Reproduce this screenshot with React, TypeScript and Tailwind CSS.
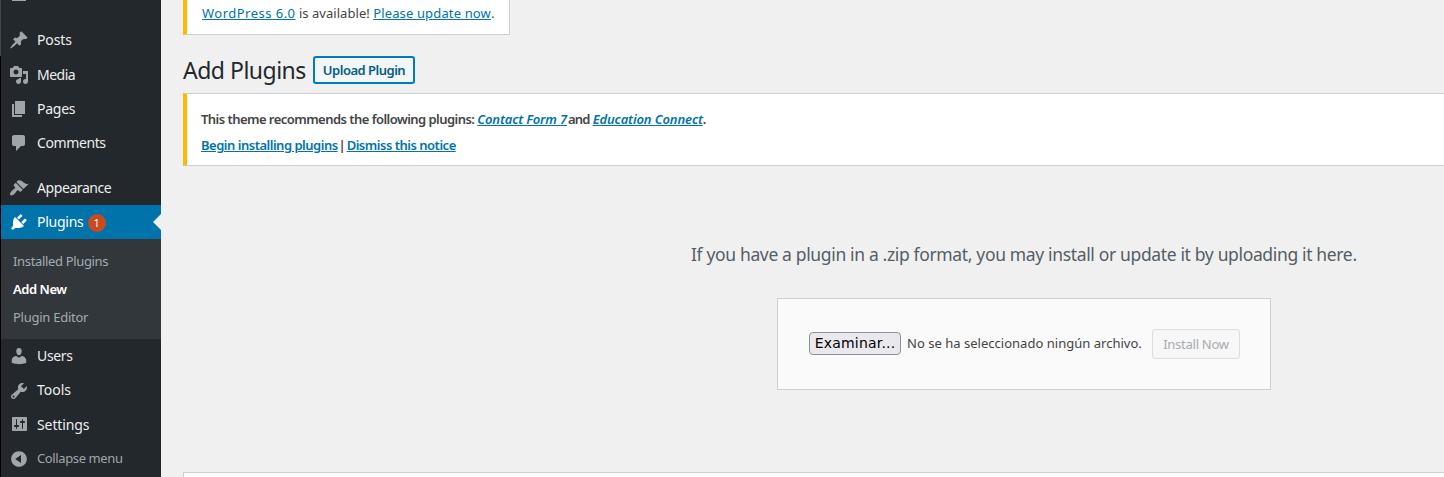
import React from "react";

const icons = {
  post: "M10.44 3.02l1.82-1.82 6.36 6.35-1.83 1.82c-1.05-.68-2.48-.57-3.41.36l-.75.75c-.92.93-1.04 2.35-.35 3.41l-1.83 1.82-2.41-2.41-2.8 2.79c-.42.42-3.38 2.71-3.8 2.29s1.86-3.39 2.28-3.81l2.79-2.79L4.1 9.36l1.83-1.82c1.05.69 2.48.57 3.4-.36l.75-.75c.93-.92 1.05-2.35.36-3.41z",
  media: "M13 11V4c0-.55-.45-1-1-1h-1.67L9 1H5L3.67 3H2c-.55 0-1 .45-1 1v7c0 .55.45 1 1 1h10c.55 0 1-.45 1-1zM7 4.5c1.38 0 2.5 1.12 2.5 2.5S8.38 9.5 7 9.5 4.5 8.38 4.5 7 5.62 4.5 7 4.5zM14 6h5v10.5c0 1.38-1.12 2.5-2.5 2.5S14 17.88 14 16.5s1.12-2.5 2.5-2.5c.17 0 .34.02.5.05V9h-3V6zm-4 8.05V13h2v3.5c0 1.38-1.12 2.5-2.5 2.5S7 17.88 7 16.5 8.12 14 9.5 14c.17 0 .34.02.5.05z",
  page: "M6 15V2h10v13H6zm-1 1h8v2H3V5h2v11z",
  comments: "M5 2h9c1.1 0 2 .9 2 2v7c0 1.1-.9 2-2 2h-2l-5 5v-5H5c-1.1 0-2-.9-2-2V4c0-1.1.9-2 2-2z",
  appearance: "M14.48 11.06L7.41 3.99l1.5-1.5c.5-.56 2.3-.47 3.51.32 1.21.8 1.43 1.28 2.91 2.1 1.18.64 2.45 1.26 4.45.85zm-.71.71L6.7 4.7 4.93 6.47c-.39.39-.39 1.02 0 1.41l1.06 1.06c.39.39.39 1.03 0 1.42-.6.6-1.43 1.11-2.21 1.69-.35.26-.7.53-1.01.84C1.43 14.23.4 16.08 1.4 17.07c.99 1 2.84-.03 4.18-1.36.31-.31.58-.66.85-1.02.57-.78 1.08-1.61 1.69-2.21.39-.39 1.02-.39 1.41 0l1.06 1.06c.39.39 1.02.39 1.41 0z",
  plugins: "M13.11 4.36L9.87 7.6 8 5.73l3.24-3.24c.35-.34 1.05-.2 1.56.32.52.51.66 1.21.31 1.55zm-8 1.77l.91-1.12 9.01 9.01-1.19.84c-.71.71-2.63 1.16-3.82 1.16H6.14L4.9 17.26c-.59.59-1.54.59-2.12 0-.59-.58-.59-1.53 0-2.12l1.24-1.24v-3.88c0-1.13.4-3.19 1.09-3.89zm7.26 3.97l3.24-3.24c.34-.35 1.04-.21 1.55.31.52.51.66 1.21.31 1.55l-3.24 3.25z",
  users: "M10 9.25c-2.27 0-2.73-3.44-2.73-3.44C7 4.02 7.82 2 9.97 2c2.16 0 2.98 2.02 2.71 3.81 0 0-.41 3.44-2.68 3.44zm0 2.57L12.72 10c2.39 0 4.52 2.33 4.52 4.53v2.49s-3.65 1.13-7.24 1.13c-3.65 0-7.24-1.13-7.24-1.13v-2.49c0-2.25 1.94-4.48 4.47-4.48z",
  tools: "M16.68 9.77c-1.34 1.34-3.3 1.67-4.95.99l-5.41 6.52c-.99.99-2.59.99-3.58 0s-.99-2.59 0-3.57l6.52-5.42c-.68-1.65-.35-3.61.99-4.95 1.28-1.28 3.12-1.62 4.72-1.06l-2.89 2.89 2.82 2.82 2.86-2.87c.53 1.58.18 3.39-1.08 4.65zM3.81 16.21c.4.39 1.04.39 1.43 0 .4-.4.4-1.04 0-1.43-.39-.4-1.03-.4-1.43 0-.39.39-.39 1.03 0 1.43z",
  settings: "M18 15V3c0-.55-.45-1-1-1H4c-.55 0-1 .45-1 1v12c0 .55.45 1 1 1h13c.55 0 1-.45 1-1zM8 10h1c.55 0 1 .45 1 1s-.45 1-1 1H8v1.5c0 .28-.22.5-.5.5s-.5-.22-.5-.5V12H6c-.55 0-1-.45-1-1s.45-1 1-1h1V4.5c0-.28.22-.5.5-.5s.5.22.5.5V10zm5-2h-1c-.55 0-1-.45-1-1s.45-1 1-1h1V4.5c0-.28.22-.5.5-.5s.5.22.5.5V6h1c.55 0 1 .45 1 1s-.45 1-1 1h-1v5.5c0 .28-.22.5-.5.5s-.5-.22-.5-.5V8z",
  collapse: "M10 2.16c4.33 0 7.84 3.51 7.84 7.84s-3.51 7.84-7.84 7.84S2.16 14.33 2.16 10 5.71 2.16 10 2.16zm2 11.72V6.12L6.18 9.97z",
};

function Icon({ name, className }: { name: keyof typeof icons; className: string }) {
  return (
    <svg viewBox="0 0 20 20" className={`h-5 w-5 shrink-0 ${className}`} fill="currentColor" fillRule="evenodd">
      <path d={icons[name]} />
    </svg>
  );
}

function Item({ name, label, box }: { name: keyof typeof icons; label: string; box: string }) {
  return (
    <a className={`flex items-center gap-2 pl-2 text-[14px] text-[#eeeeee] ${box}`}>
      <Icon name={name} className="text-[#a0a5aa]" />
      <span className={name === "media" ? "pb-0" : "pb-[2px]"}>{label}</span>
    </a>
  );
}

const link = "text-[#0073aa] underline";

export default function App() {
  return (
    <div className="flex h-[477px] w-[1444px] overflow-hidden bg-[#f0f0f0] font-['Noto_Sans',sans-serif] text-[13px] whitespace-nowrap text-[#444]">
      <div className="flex w-px shrink-0 flex-col bg-black">
        <div className="h-[56px] bg-[#4a4442]" />
      </div>
      <nav className="flex w-40 shrink-0 flex-col bg-[#23282d]">
        <div className="ml-[11px] h-px w-[14px] bg-[#a0a5aa]" />
        <Item name="post" label="Posts" box="mt-[22px] h-[34px] tracking-[-0.1px]" />
        <Item name="media" label="Media" box="h-[35px] tracking-[-0.5px]" />
        <Item name="page" label="Pages" box="h-[34px] tracking-[-0.25px]" />
        <Item name="comments" label="Comments" box="h-[34px] tracking-[-0.4px]" />
        <Item name="appearance" label="Appearance" box="mt-[11px] h-[34px] tracking-[-0.42px]" />
        <a className="flex h-[34px] items-center gap-2 bg-[#0073aa] pl-2 text-[14px] text-white">
          <Icon name="plugins" className="text-white" />
          <span className="pb-[2px] tracking-[-0.25px]">Plugins</span>
          <span className="mt-[2px] -ml-1 flex h-[18px] w-[18px] items-center justify-center rounded-full bg-[#ca4a1f] text-[11px]">1</span>
          <svg viewBox="0 0 8 16" className="ml-auto h-4 w-2" fill="#f0f0f0"><path d="M8 0v16L0 8z" /></svg>
        </a>
        <div className="flex h-[100px] flex-col bg-[#32373c] pt-2 pl-3 text-[13px] leading-7 text-[#a5abb0]">
          <a className="tracking-[-0.34px]">Installed Plugins</a>
          <a className="font-semibold tracking-[-0.45px] text-white">Add New</a>
          <a className="tracking-[-0.26px]">Plugin Editor</a>
        </div>
        <Item name="users" label="Users" box="h-[34px] tracking-[-0.35px]" />
        <Item name="tools" label="Tools" box="h-[35px]" />
        <Item name="settings" label="Settings" box="h-[34px] tracking-[-0.1px]" />
        <a className="flex h-[34px] items-center gap-2 pl-2 text-[13px] tracking-[-0.38px] text-[#a0a5aa]">
          <Icon name="collapse" className="text-[#a0a5aa]" />
          <span>Collapse menu</span>
        </a>
      </nav>
      <main className="flex w-[1283px] shrink-0 flex-col pl-[22px]">
        <div className="h-[35px] w-[327px] border-r border-b border-l-4 border-[#ccd0d4] border-l-[#ffb900] bg-white pt-[3px] pl-[15px] leading-5">
          <a className={`${link} tracking-[0.48px]`}>WordPress 6.0</a> <span className="tracking-[0.04px]">is available!</span> <a className={`${link} tracking-[0.14px]`}>Please update now</a>.
        </div>
        <div className="mt-[21px] flex h-7 items-center">
          <h1 className="w-[130px] pt-px text-[23px] tracking-[-0.5px] text-[#23282d]">Add Plugins</h1>
          <button className="flex h-7 w-[102px] items-center justify-center rounded-[3px] border-2 border-[#007cba] bg-[#f3f5f6] pt-px text-[13px] font-semibold tracking-[-0.5px] text-[#016087]">Upload Plugin</button>
        </div>
        <div className="mt-[9px] flex h-[73px] flex-col border-y border-l-4 border-[#ccd0d4] border-l-[#ffb900] bg-white pt-3 pl-[14px] text-[13px] leading-[26px] font-semibold tracking-[-0.54px]">
          <p>
            This theme recommends the following plugins: <a className={`${link} tracking-[-0.14px] italic`}>Contact Form 7</a><span className="ml-px mr-[3px] tracking-[-0.8px]">and</span><a className={`${link} tracking-[-0.12px] italic`}>Education Connect</a>.
          </p>
          <p className="flex">
            <a className={`${link} tracking-[-0.49px]`}>Begin installing plugins</a>
            <span className="w-[9px] text-center tracking-normal">|</span>
            <a className={`${link} tracking-[-0.49px]`}>Dismiss this notice</a>
          </p>
        </div>
        <p className="mt-[74px] ml-[508px] text-[17.5px] leading-7 tracking-[-0.35px] text-[#555d66]">If you have a plugin in a .zip format, you may install or update it by uploading it here.</p>
        <div className="mt-[30px] ml-[594px] flex h-[92px] w-[494px] items-center border border-[#ccd0d4] bg-[#fafafa] pl-[31px]">
          <button className="mb-px flex h-[23px] w-[92px] items-center justify-center rounded-[4px] border border-[#8f8f9d] bg-[#e9e9ed] font-['DejaVu_Sans',sans-serif] text-[14px] tracking-[0.2px] text-black">Examinar...</button>
          <span className="ml-[6px] w-[245px] tracking-[0.02px]">No se ha seleccionado ningún archivo.</span>
          <button className="flex h-[30px] w-[88px] items-center justify-center rounded-[3px] border border-[#dddddd] bg-[#f7f7f7] pt-px text-[13px] tracking-[-0.26px] text-[#a7abaf]">Install Now</button>
        </div>
        <div className="mt-[82px] h-[5px] shrink-0 border-t border-l border-[#ccd0d4] bg-white" />
      </main>
    </div>
  );
}
